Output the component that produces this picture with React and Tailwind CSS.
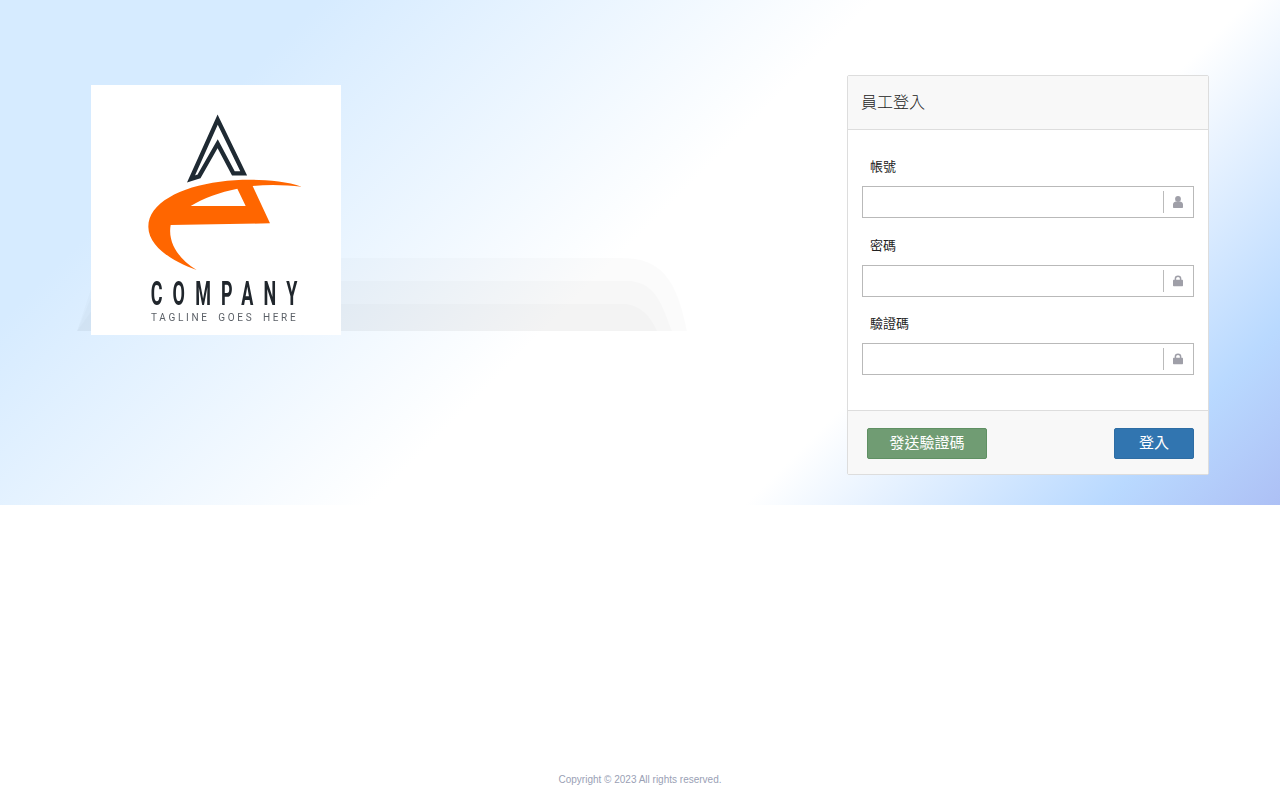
const cjk = "font-['Liberation_Sans','Noto_Sans_CJK_TC',sans-serif]";

const UserIcon = () => (
    <svg viewBox="0 0 10 12" className="w-[10px] h-[12px]" fill="currentColor">
        <ellipse cx="5" cy="3" rx="2.9" ry="3" />
        <path d="M0 11 V8.6 C0 7 1.2 6 2.6 5.6 C3.4 6.2 6.6 6.2 7.4 5.6 C8.8 6 10 7 10 8.6 V11 C10 11.6 9.6 12 9 12 H1 C0.4 12 0 11.6 0 11 Z" />
    </svg>
);

const LockIcon = () => (
    <svg viewBox="0 0 10 12" className="w-[10px] h-[12px]" fill="currentColor">
        <path d="M2.4 5 V3.6 C2.4 0.6 7.6 0.6 7.6 3.6 V5" fill="none" stroke="currentColor" strokeWidth="1.5" />
        <rect x="0" y="4.8" width="10" height="6.4" rx="0.7" />
    </svg>
);

const fields = [
    { label: "帳號", icon: <UserIcon /> },
    { label: "密碼", icon: <LockIcon /> },
    { label: "驗證碼", icon: <LockIcon /> },
];

const Logo = () => (
    <svg viewBox="33 15 750 750" className="w-[250px] h-[250px] bg-white blur-[0.4px]">
        <path d="M413 119 L491 280 L460 280 L413 191 L357 289 L333 297 Z" fill="#fff" stroke="#1f2a33" strokeWidth="13" />
        <path
            fillRule="evenodd"
            fill="#ff6600"
            d="M665 320 C600 298 500 295 420 305 C300 320 205 370 205 440 C205 500 280 545 350 570 C300 540 262 490 272 435 L570 430 L518 318 C570 312 620 315 665 320 Z M332 378 C370 355 420 336 472 326 L497 378 Z"
        />
        <text transform="translate(212 675) scale(0.55 1)" textLength="800" lengthAdjust="spacing" fontFamily="Roboto, sans-serif" fontWeight="700" fontSize="98" fill="#20262c">
            COMPANY
        </text>
        <text x="213" y="722" textLength="434" lengthAdjust="spacing" wordSpacing="10" fontFamily="Roboto, sans-serif" fontWeight="400" fontSize="30" fill="#5a5f66">
            TAGLINE GOES HERE
        </text>
    </svg>
);

const Shadow = () => (
    <svg viewBox="0 0 620 80" className="absolute left-[72px] top-[255px] w-[620px] h-[80px]">
        <path d="M5 76 L20 31 L22 3 L550 3 C590 3 605 25 615 76 Z" fill="#000" fillOpacity="0.015" />
        <path d="M5 76 L20 40 L22 26 L560 26 C585 30 590 50 600 76 Z" fill="#000" fillOpacity="0.015" />
        <path d="M5 76 L20 55 L22 49 L555 49 C570 52 578 60 585 76 Z" fill="#000" fillOpacity="0.015" />
    </svg>
);

const LoginPanel = () => (
    <div className={`w-[362px] h-[400px] mt-[75px] flex flex-col bg-white border border-[#ddd] rounded-[2px] text-[#222] ${cjk}`}>
        <div className="h-[54px] shrink-0 flex items-center px-[13px] bg-[#f8f8f8] border-b border-[#ddd] text-[16px] font-light">員工登入</div>
        <div className="flex-1 flex flex-col gap-[17.5px] pt-[27px] px-[14px]">
            {fields.map((field) => (
                <div key={field.label} className="flex flex-col gap-[9px]">
                    <label className="px-2 text-[13px] leading-[20px]">{field.label}</label>
                    <div className="h-[32px] flex items-center border border-[#b9b9b9] bg-white">
                        <input className="flex-1 min-w-0 h-full outline-none" />
                        <div className="w-[30px] h-[22px] flex items-center justify-center pr-[1px] border-l border-[#bbb] text-[#9f9fa8]">{field.icon}</div>
                    </div>
                </div>
            ))}
        </div>
        <div className="h-[64px] shrink-0 flex items-start justify-between pt-[17px] pl-[19px] pr-[14px] bg-[#f8f8f8] border-t border-[#ddd]">
            <button className="w-[120px] h-[31px] bg-[#709c73] border border-[#5f9063] rounded-[2px] text-white text-[15px]">發送驗證碼</button>
            <button className="w-[80px] h-[31px] bg-[#3175b0] border border-[#2e6da4] rounded-[2px] text-white text-[15px]">登入</button>
        </div>
    </div>
);

const App = () => {
    return (
        <div className="min-h-screen flex flex-col bg-white">
            <section className="relative h-[505px] flex items-start justify-between pl-[91px] pr-[71px] bg-[linear-gradient(135deg,#d6ebff_0%,#d6ebff_18%,#ffffff_49%,#ffffff_70%,#b9d9ff_90%,#adc0f5_100%)]">
                <Shadow />
                <div className="relative mt-[85px]">
                    <Logo />
                </div>
                <LoginPanel />
            </section>
            <footer className="mt-auto pb-[13px] text-center text-[#9a9fb5] text-[10px] leading-[14px] font-['Liberation_Sans',sans-serif]">
                Copyright © 2023 All rights reserved.
            </footer>
        </div>
    );
};

export default App;
